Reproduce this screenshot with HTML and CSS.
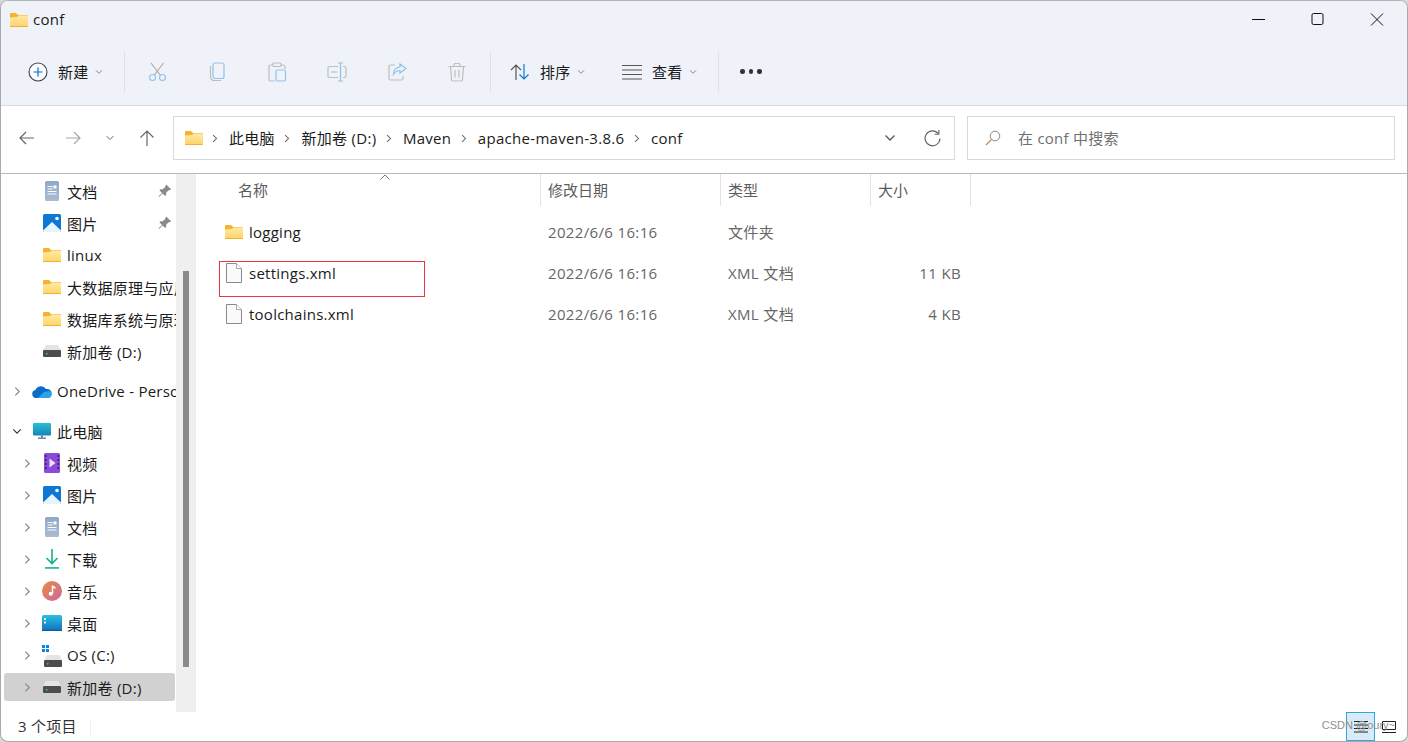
FILE: index.html
```html
<!DOCTYPE html>
<html lang="zh-CN">
<head>
<meta charset="utf-8">
<title>conf</title>
<link rel="stylesheet" href="styles.css">
</head>
<body>
<svg class="defs" width="0" height="0" aria-hidden="true">
  <defs>
    <linearGradient id="gFolder" x1="0" y1="0" x2="0" y2="1"><stop offset="0" stop-color="#ffeaa6"/><stop offset="1" stop-color="#fdd368"/></linearGradient>
    <linearGradient id="gDoc" x1="0" y1="0" x2="0" y2="1"><stop offset="0" stop-color="#8fa9c6"/><stop offset="1" stop-color="#a9bbd0"/></linearGradient>
    <linearGradient id="gMusic" x1="0" y1="0" x2="1" y2="1"><stop offset="0" stop-color="#ec8a3f"/><stop offset="1" stop-color="#c8699c"/></linearGradient>
    <linearGradient id="gDesk" x1="0" y1="0" x2="0" y2="1"><stop offset="0" stop-color="#2cc0dc"/><stop offset="1" stop-color="#1070c0"/></linearGradient>
    <linearGradient id="gPc" x1="0" y1="0" x2="0" y2="1"><stop offset="0" stop-color="#28c0d8"/><stop offset="1" stop-color="#1585b5"/></linearGradient>
    <symbol id="folder" viewBox="0 0 18 14">
      <path d="M0 1a1 1 0 0 1 1-1h5l2 2h9a1 1 0 0 1 1 1v10a1 1 0 0 1-1 1H1a1 1 0 0 1-1-1z" fill="#f4b42f"/>
      <path d="M0 4.500l7-.5 2-1.500h8a1 1 0 0 1 1 1V13a1 1 0 0 1-1 1H1a1 1 0 0 1-1-1z" fill="url(#gFolder)"/>
      <path d="M0 13h18v.2a.8.8 0 0 1-.8.8H.8a.8.8 0 0 1-.8-.8z" fill="#f0b030"/>
    </symbol>
    <symbol id="doc" viewBox="0 0 14 20">
      <rect width="14" height="20" rx="1.500" fill="url(#gDoc)"/>
      <path d="M2.500 5h5v1h-5zM2.500 7.500h5v1h-5zM2.500 10h9v1h-9zM2.500 12.500h9v1h-9z" fill="#fff"/>
      <rect x="8.500" y="4.500" width="3" height="3" fill="#fff"/>
    </symbol>
    <symbol id="pic" viewBox="0 0 18 18">
      <rect width="18" height="18" rx="1.500" fill="#0b78d4"/>
      <path d="M0 16.500L9 8l9 8.500V17a1 1 0 0 1-1 1H1a1 1 0 0 1-1-1z" fill="#e8f3fb"/>
      <circle cx="14" cy="4.500" r="1.800" fill="#fff"/>
    </symbol>
    <symbol id="drive" viewBox="0 0 18 12">
      <path d="M3 0h12l3 5H0z" fill="#e4e4e4"/>
      <path d="M1 5h16a1 1 0 0 1 1 1v5a1 1 0 0 1-1 1H1a1 1 0 0 1-1-1V6a1 1 0 0 1 1-1z" fill="#4d4d4d"/>
      <rect x="3" y="8" width="1.500" height="1.500" fill="#3ed070"/>
    </symbol>
    <symbol id="cloud" viewBox="0 0 20 13">
      <path d="M4 13a4 4 0 0 1-.6-7.900A6 6 0 0 1 14 4a4.500 4.500 0 0 1 2 9z" fill="#0a6cc4"/>
      <path d="M6 13l6-6 5-1a3.600 3.600 0 0 1-.500 7z" fill="#29a3ea"/>
    </symbol>
    <symbol id="pc" viewBox="0 0 18 16">
      <rect width="18" height="12.500" rx="1" fill="url(#gPc)"/>
      <rect x="8" y="12.500" width="2" height="2" fill="#5d7380"/>
      <rect x="5" y="14.500" width="8" height="1.300" fill="#5d7380"/>
    </symbol>
    <symbol id="video" viewBox="0 0 16 20">
      <rect width="16" height="20" rx="1.500" fill="#8a4bd6"/>
      <path d="M5.500 5.500l6 4.500-6 4.500z" fill="#efe4fb"/>
      <path d="M1 2h1.500v2H1zM1 6h1.500v2H1zM1 10h1.500v2H1zM1 14h1.500v2H1zM13.500 2H15v2h-1.500zM13.500 6H15v2h-1.500zM13.500 10H15v2h-1.500zM13.500 14H15v2h-1.500z" fill="#3c2066"/>
    </symbol>
    <symbol id="down" viewBox="0 0 14 20">
      <path d="M7 0v14M1.500 9L7 14.500 12.500 9" fill="none" stroke="#12b08a" stroke-width="1.600"/>
      <rect y="18" width="14" height="1.800" fill="#2bbf9a"/>
    </symbol>
    <symbol id="music" viewBox="0 0 20 20">
      <circle cx="10" cy="10" r="10" fill="url(#gMusic)"/>
      <path d="M10.500 4.500v8" stroke="#fff" stroke-width="1.500" fill="none"/>
      <circle cx="8.700" cy="12.700" r="2" fill="#fff"/>
      <path d="M10.500 4.500l3 1.500v1.700l-3-1z" fill="#fff"/>
    </symbol>
    <symbol id="desk" viewBox="0 0 20 16">
      <rect width="20" height="16" rx="1.500" fill="url(#gDesk)"/>
      <rect x="2" y="3" width="2" height="2" fill="#d8f4fa"/>
      <rect x="2" y="6.500" width="2" height="2" fill="#d8f4fa"/>
      <rect y="14.800" width="20" height="1.200" fill="#0a5ca8"/>
    </symbol>
    <symbol id="file" viewBox="0 0 16 20">
      <path d="M.5.500h10l5 5v14H.500z" fill="#fafafa" stroke="#8a8a8a"/>
      <path d="M10.500.500v5h5" fill="#fff" stroke="#a8a8a8"/>
    </symbol>
    <symbol id="chev-r" viewBox="0 0 8 12"><path d="M1.500 1.500L6 6l-4.500 4.500" fill="none" stroke="currentColor" stroke-width="1.400"/></symbol>
    <symbol id="chev-d" viewBox="0 0 12 8"><path d="M1.500 1.500L6 6l4.500-4.500" fill="none" stroke="currentColor" stroke-width="1.300"/></symbol>
    <symbol id="pin" viewBox="0 0 14 14"><path d="M8.500.800l4.700 4.700-1.300.700-.9-.3-2.700 2.700-.1 2.400-1 1L4.600 9.400 1 13l-.6-.4 3.600-3.700-2.600-2.600 1-1 2.400-.1L7.500 2.500l-.2-.9z" fill="#8a8a8a"/></symbol>
  </defs>
</svg>

<div class="window">
  <header class="chrome">
    <div class="titlebar">
      <svg class="ico-title"><use href="#folder"/></svg>
      <span class="title-text">conf</span>
      <div class="winctl">
        <svg class="ctl" viewBox="0 0 14 14"><path d="M0 6.500h13" stroke="#111" stroke-width="1" fill="none"/></svg>
        <svg class="ctl" viewBox="0 0 14 14"><rect x="1" y=".5" width="11" height="11" rx="1.500" stroke="#111" stroke-width="1" fill="none"/></svg>
        <svg class="ctl" viewBox="0 0 14 14"><path d="M1 .5l12 12M13 .5l-12 12" stroke="#111" stroke-width="1" fill="none"/></svg>
      </div>
    </div>
    <div class="toolbar">
      <div class="tool tool-new">
        <svg class="tico-20" viewBox="0 0 20 20"><circle cx="10" cy="10" r="9" fill="#fafbfe" stroke="#444" stroke-width="1.100"/><path d="M10 5.500v9M5.500 10h9" stroke="#0a6cc4" stroke-width="1.200"/></svg>
        <span class="tool-label">新建</span>
        <svg class="tchev"><use href="#chev-d"/></svg>
      </div>
      <i class="tsep"></i>
      <div class="tool-group">
        <svg class="tico-20" viewBox="0 0 20 20"><g fill="none" stroke-width="1.100"><path d="M4 1l9.500 12.500M16.500 1L7 13.500" stroke="#a8a8a8"/><circle cx="5.500" cy="15.500" r="3" stroke="#93c2ea"/><circle cx="15.500" cy="15.500" r="3" stroke="#93c2ea"/></g></svg>
        <svg class="tico-20" viewBox="0 0 20 20"><g fill="none" stroke-width="1.200"><path d="M3.500 4v11a3.500 3.500 0 0 0 3.500 3.500h7" stroke="#bdbdbd"/><rect x="6" y="1" width="11" height="15.500" rx="2" stroke="#93c2ea"/></g></svg>
        <svg class="tico-20" viewBox="0 0 20 20"><g fill="none" stroke-width="1.200"><path d="M6 3H3.500A1.500 1.500 0 0 0 2 4.500v13A1.500 1.500 0 0 0 3.500 19H8M14 3h2.500A1.500 1.500 0 0 1 18 4.500V7" stroke="#bdbdbd"/><rect x="6" y="1" width="8" height="3.500" rx="1" stroke="#bdbdbd"/><rect x="9" y="8" width="9.500" height="11" rx="1.500" stroke="#93c2ea"/></g></svg>
        <svg class="tico-20" viewBox="0 0 20 20"><g fill="none" stroke-width="1.200"><path d="M11 4.500H2.500A1.500 1.500 0 0 0 1 6v8a1.500 1.500 0 0 0 1.500 1.500H11M16 4.500h1.500A1.500 1.500 0 0 1 19 6v8a1.500 1.500 0 0 1-1.500 1.500H16" stroke="#bdbdbd"/><path d="M13.500 1v18M11 1h5M11 19h5M4 10h6" stroke="#93c2ea"/></g></svg>
        <svg class="tico-20" viewBox="0 0 20 20"><g fill="none" stroke-width="1.200"><path d="M8 3H3.500A1.500 1.500 0 0 0 2 4.500v12A1.500 1.500 0 0 0 3.500 18h11a1.500 1.500 0 0 0 1.500-1.500V14" stroke="#bdbdbd"/><path d="M13 2l6 4.500-6 4.500V8.500c-3.500 0-5 1.500-6.500 4 0-4 2.500-7 6.500-7.500z" stroke="#93c2ea"/></g></svg>
        <svg class="tico-20" viewBox="0 0 20 20"><g fill="none" stroke="#bdbdbd" stroke-width="1.200"><path d="M1.500 4.500h17M7 4.500V3a1.500 1.500 0 0 1 1.500-1.500h3A1.500 1.500 0 0 1 13 3v1.500M3.500 4.500l1 13a1.500 1.500 0 0 0 1.500 1.500h8a1.500 1.500 0 0 0 1.500-1.500l1-13M8 8v7.500M12 8v7.500"/></g></svg>
      </div>
      <i class="tsep"></i>
      <div class="tool tool-sort">
        <svg class="tico-20" viewBox="0 0 20 20"><path d="M6 18V3M1 8l5-5 5 5" fill="none" stroke="#555" stroke-width="1.200"/><path d="M14 2v15M9.500 12.500L14 17l4.500-4.500" fill="none" stroke="#0a7cd4" stroke-width="1.200"/></svg>
        <span class="tool-label">排序</span>
        <svg class="tchev"><use href="#chev-d"/></svg>
      </div>
      <div class="tool tool-view">
        <svg class="tico-20" viewBox="0 0 20 20"><path d="M0 3.500h20M0 8h20M0 12.500h20M0 17h20" fill="none" stroke="#555" stroke-width="1"/></svg>
        <span class="tool-label">查看</span>
        <svg class="tchev"><use href="#chev-d"/></svg>
      </div>
      <i class="tsep"></i>
      <div class="dots"><i></i><i></i><i></i></div>
    </div>
  </header>

  <nav class="navbar">
    <div class="navbtns">
      <svg class="nico" viewBox="0 0 16 16"><path d="M15 8H1M7 2L1 8l6 6" fill="none" stroke="#666" stroke-width="1.200"/></svg>
      <svg class="nico" viewBox="0 0 16 16"><path d="M1 8h14M9 2l6 6-6 6" fill="none" stroke="#a8a8a8" stroke-width="1.200"/></svg>
      <svg class="nchev"><use href="#chev-d"/></svg>
      <svg class="nico nico-up" viewBox="0 0 16 16"><path d="M8 16V1M1.500 7.500L8 1l6.500 6.500" fill="none" stroke="#666" stroke-width="1.200"/></svg>
    </div>
    <div class="address">
      <svg class="addr-folder"><use href="#folder"/></svg>
      <svg class="crumb-chev"><use href="#chev-r"/></svg>
      <span class="crumb">此电脑</span>
      <svg class="crumb-chev"><use href="#chev-r"/></svg>
      <span class="crumb">新加卷 (D:)</span>
      <svg class="crumb-chev"><use href="#chev-r"/></svg>
      <span class="crumb">Maven</span>
      <svg class="crumb-chev"><use href="#chev-r"/></svg>
      <span class="crumb">apache-maven-3.8.6</span>
      <svg class="crumb-chev"><use href="#chev-r"/></svg>
      <span class="crumb">conf</span>
      <svg class="addr-drop"><use href="#chev-d"/></svg>
      <svg class="addr-refresh" viewBox="0 0 16 16"><path d="M13.500 3.500A7 7 0 1 0 15 8" fill="none" stroke="#666" stroke-width="1.100"/><path d="M14 0v4h-4" fill="none" stroke="#666" stroke-width="1.100"/></svg>
    </div>
    <div class="search">
      <svg class="search-ico" viewBox="0 0 16 16"><circle cx="10" cy="6" r="4.800" fill="none" stroke="#888" stroke-width="1"/><path d="M6.500 9.500L1 15" stroke="#b08a60" stroke-width="1.100"/></svg>
      <span class="search-text">在 conf 中搜索</span>
    </div>
  </nav>

  <main class="body">
    <aside class="sidebar">
      <div class="tree">
        <div class="row"><span class="chev-slot"></span><span class="icon-slot"><svg class="i-doc"><use href="#doc"/></svg></span><span class="lbl">文档</span><svg class="pin"><use href="#pin"/></svg></div>
        <div class="row"><span class="chev-slot"></span><span class="icon-slot"><svg class="i-pic"><use href="#pic"/></svg></span><span class="lbl">图片</span><svg class="pin"><use href="#pin"/></svg></div>
        <div class="row"><span class="chev-slot"></span><span class="icon-slot"><svg class="i-folder"><use href="#folder"/></svg></span><span class="lbl">linux</span></div>
        <div class="row"><span class="chev-slot"></span><span class="icon-slot"><svg class="i-folder"><use href="#folder"/></svg></span><span class="lbl">大数据原理与应用</span></div>
        <div class="row"><span class="chev-slot"></span><span class="icon-slot"><svg class="i-folder"><use href="#folder"/></svg></span><span class="lbl">数据库系统与原理</span></div>
        <div class="row"><span class="chev-slot"></span><span class="icon-slot"><svg class="i-drive"><use href="#drive"/></svg></span><span class="lbl">新加卷 (D:)</span></div>
        <div class="row lv0 spaced"><span class="chev-slot"><svg class="chev"><use href="#chev-r"/></svg></span><span class="icon-slot"><svg class="i-cloud"><use href="#cloud"/></svg></span><span class="lbl">OneDrive - Personal</span></div>
        <div class="row lv0"><span class="chev-slot"><svg class="chev-open"><use href="#chev-d"/></svg></span><span class="icon-slot"><svg class="i-pc"><use href="#pc"/></svg></span><span class="lbl">此电脑</span></div>
        <div class="row"><span class="chev-slot"><svg class="chev"><use href="#chev-r"/></svg></span><span class="icon-slot"><svg class="i-video"><use href="#video"/></svg></span><span class="lbl">视频</span></div>
        <div class="row"><span class="chev-slot"><svg class="chev"><use href="#chev-r"/></svg></span><span class="icon-slot"><svg class="i-pic"><use href="#pic"/></svg></span><span class="lbl">图片</span></div>
        <div class="row"><span class="chev-slot"><svg class="chev"><use href="#chev-r"/></svg></span><span class="icon-slot"><svg class="i-doc"><use href="#doc"/></svg></span><span class="lbl">文档</span></div>
        <div class="row"><span class="chev-slot"><svg class="chev"><use href="#chev-r"/></svg></span><span class="icon-slot"><svg class="i-doc"><use href="#down"/></svg></span><span class="lbl">下载</span></div>
        <div class="row"><span class="chev-slot"><svg class="chev"><use href="#chev-r"/></svg></span><span class="icon-slot"><svg class="i-music"><use href="#music"/></svg></span><span class="lbl">音乐</span></div>
        <div class="row"><span class="chev-slot"><svg class="chev"><use href="#chev-r"/></svg></span><span class="icon-slot"><svg class="i-desk"><use href="#desk"/></svg></span><span class="lbl">桌面</span></div>
        <div class="row"><span class="chev-slot"><svg class="chev"><use href="#chev-r"/></svg></span><span class="icon-slot os-slot"><svg class="i-drive os-drive"><use href="#drive"/></svg><svg class="winlogo" viewBox="0 0 7 7"><path d="M0 0h3v3H0zM4 0h3v3H4zM0 4h3v3H0zM4 4h3v3H4z" fill="#0a84e0"/></svg></span><span class="lbl">OS (C:)</span></div>
        <div class="row selected"><span class="chev-slot"><svg class="chev"><use href="#chev-r"/></svg></span><span class="icon-slot"><svg class="i-drive"><use href="#drive"/></svg></span><span class="lbl">新加卷 (D:)</span></div>
      </div>
      <div class="scrolltrack"><div class="thumb"></div></div>
    </aside>

    <section class="list">
      <div class="cols head">
        <div class="hcell hname">名称<svg class="sortcaret" viewBox="0 0 10 6"><path d="M.5 5.500L5 1l4.500 4.500" fill="none" stroke="#777" stroke-width="1"/></svg></div>
        <div class="hcell">修改日期</div>
        <div class="hcell">类型</div>
        <div class="hcell">大小</div>
      </div>
      <div class="rows">
        <div class="cols frow">
          <div class="cname"><svg class="f-folder"><use href="#folder"/></svg><span>logging</span></div>
          <div class="cell">2022/6/6 16:16</div>
          <div class="cell">文件夹</div>
          <div class="cell csize"></div>
        </div>
        <div class="cols frow">
          <div class="cname"><svg class="f-file"><use href="#file"/></svg><span>settings.xml</span></div>
          <div class="cell">2022/6/6 16:16</div>
          <div class="cell">XML 文档</div>
          <div class="cell csize">11 KB</div>
        </div>
        <div class="cols frow">
          <div class="cname"><svg class="f-file"><use href="#file"/></svg><span>toolchains.xml</span></div>
          <div class="cell">2022/6/6 16:16</div>
          <div class="cell">XML 文档</div>
          <div class="cell csize">4 KB</div>
        </div>
      </div>
      <div class="redbox"></div>
    </section>
  </main>

  <footer class="status">
    <span class="count">3 个项目</span>
    <i class="ssep"></i>
    <div class="viewbtns">
      <div class="vbtn active"><svg class="vico" viewBox="0 0 16 14"><path d="M1 1.500h14M1 5h14M1 8.500h14M1 12h14" stroke="#222" stroke-width="1" fill="none"/></svg></div>
      <div class="vbtn"><svg class="vico" viewBox="0 0 16 14"><path d="M1.500 1.500h13v8h-13zM1 12.500h14" stroke="#222" stroke-width="1" fill="none"/></svg></div>
    </div>
    <span class="watermark">CSDN @oury~</span>
  </footer>
</div>
</body>
</html>
```
FILE: styles.css
```css
* { box-sizing: border-box; }
html, body { margin: 0; padding: 0; height: 100%; background: #d8d8d8; overflow: hidden; }
body { font-family: "Open Sans", "Noto Sans CJK SC", sans-serif; font-size: 15px; letter-spacing: .25px; color: #1b1b1b; }
svg { display: block; flex: none; }
.defs { position: absolute; }
.window { width: 1408px; height: 742px; display: flex; flex-direction: column; background: #fff; border: 1px solid #a9a9a9; border-top-color: #b4b4b4; border-radius: 8px; overflow: hidden; }

.chrome { height: 105px; background: #eff2f9; border-bottom: 1px solid #d9dadd; flex: none; }
.titlebar { height: 37px; display: flex; align-items: center; padding-left: 9px; }
.ico-title { width: 18px; height: 14px; margin-top: 1px; }
.title-text { margin-left: 5px; margin-top: -1px; }
.winctl { margin-left: auto; display: flex; gap: 45px; padding-right: 23px; }
.ctl { width: 14px; height: 14px; }

.toolbar { height: 67px; display: flex; align-items: center; padding-left: 27px; }
.tool { display: flex; align-items: center; }
.tico-20 { width: 20px; height: 20px; }
.tool-label { margin-left: 10px; width: 30px; white-space: nowrap; }
.tchev { width: 8px; height: 6px; color: #777; margin-left: 7px; }
.tsep { width: 1px; height: 40px; background: #dde0e6; flex: none; }
.tool-new { width: 96px; }
.tool-group { display: flex; gap: 40px; padding-left: 22px; padding-right: 23px; }
.tool-sort { padding-left: 19px; width: 131px; }
.tool-view { width: 96px; }
.dots { display: flex; gap: 4px; margin-left: 21px; }
.dots i { width: 4.500px; height: 4.500px; border-radius: 50%; background: #333; }

.navbar { height: 68px; display: flex; align-items: center; border-bottom: 1px solid #b9b9b9; flex: none; padding-left: 18px; padding-bottom: 3px; }
.navbtns { display: flex; align-items: center; width: 154px; }
.nico { width: 16px; height: 16px; margin-right: 30px; }
.nchev { width: 10px; height: 6px; color: #666; margin-right: 24px; margin-left: -6px; }
.nico-up { margin: 0; }
.address { width: 782px; height: 44px; border: 1px solid #d9d9d9; display: flex; align-items: center; padding-left: 11px; background: #fff; }
.addr-folder { width: 18px; height: 14px; margin-right: 9px; }
.crumb-chev { width: 6px; height: 9px; color: #666; margin: 0 11px 0 0; }
.crumb { letter-spacing: .3px; margin-right: 9.500px; margin-top: -1px; white-space: nowrap; }
.addr-drop { width: 14px; height: 8px; color: #555; margin-left: auto; }
.addr-refresh { width: 17px; height: 17px; margin-left: 27px; margin-right: 13px; }
.search { width: 428px; height: 44px; margin-left: 12px; border: 1px solid #d9d9d9; display: flex; align-items: center; padding-left: 17px; }
.search-ico { width: 16px; height: 16px; }
.search-text { margin-left: 17px; color: #707070; white-space: nowrap; margin-top: -1px; }

.body { flex: 1; display: flex; min-height: 0; }
.sidebar { width: 195px; display: flex; flex: none; overflow: hidden; }
.tree { width: 175px; padding-top: 1px; flex: none; overflow: hidden; }
.row { height: 32px; display: flex; align-items: center; white-space: nowrap; overflow: hidden; position: relative; padding-left: 22px; }
.lv0 { padding-left: 12px; }
.spaced { margin-top: 8px; margin-bottom: 8px; }
.chev-slot { width: 8px; height: 12px; flex: none; display: flex; align-items: center; justify-content: center; }
.chev { width: 7px; height: 11px; color: #8a8a8a; }
.chev-open { width: 10px; height: 7px; color: #333; flex: none; }
.icon-slot { width: 20px; height: 24px; margin-left: 11px; flex: none; display: flex; align-items: center; justify-content: center; }
.lbl { margin-left: 5px; white-space: nowrap; }
.i-doc { width: 14px; height: 20px; }
.i-pic { width: 18px; height: 18px; }
.i-folder { width: 18px; height: 14px; }
.i-drive { width: 18px; height: 12px; }
.i-video { width: 16px; height: 20px; }
.i-music { width: 20px; height: 20px; }
.i-desk { width: 20px; height: 16px; }
.i-cloud { width: 20px; height: 13px; }
.i-pc { width: 18px; height: 16px; }
.os-slot { position: relative; }
.os-drive { margin-top: 12px; margin-left: 1px; }
.winlogo { position: absolute; left: 0; top: 2px; width: 7px; height: 7px; }
.pin { position: absolute; left: 157px; top: 9px; width: 14px; height: 14px; }
.selected { background: #d1d1d1; border-radius: 3px; margin: 2px 1px 0 3px; height: 28px; padding-left: 19px; }

.scrolltrack { width: 20px; background: #efefef; flex: none; padding-top: 97px; padding-left: 7px; }
.thumb { width: 6px; height: 396px; background: #8b8b8b; }

.list { flex: 1; position: relative; min-width: 0; }
.cols { display: grid; grid-template-columns: 345px 180px 150px 100px; }
.head { height: 32px; }
.hcell { border-right: 1px solid #e3e3e3; padding-left: 7px; padding-bottom: 2px; display: flex; align-items: center; color: #5c5c5c; letter-spacing: 0; }
.hname { padding-left: 42px; position: relative; }
.sortcaret { position: absolute; left: 184px; top: 0; width: 10px; height: 6px; }
.rows { padding-top: 5px; }
.frow { height: 41px; align-items: center; }
.cname { display: flex; align-items: center; padding-left: 29px; }
.f-folder { width: 18px; height: 14px; margin-right: 6px; }
.f-file { width: 16px; height: 20px; margin: 0 7px 0 1px; }
.cell { padding-left: 7px; color: #666; letter-spacing: .35px; white-space: nowrap; }
.csize { text-align: right; padding-right: 10px; }
.redbox { position: absolute; left: 23px; top: 87px; width: 206px; height: 36px; border: 1px solid #f0333a; }

.status { height: 29px; display: flex; align-items: center; position: relative; flex: none; padding-left: 17px; }
.count { color: #333; margin-top: -3px; }
.ssep { width: 1px; height: 16px; background: #eee; margin-left: 13px; }
.viewbtns { margin-left: auto; display: flex; gap: 4px; padding-right: 8px; height: 100%; align-items: center; }
.vbtn { width: 20px; height: 27px; display: flex; align-items: center; justify-content: center; }
.vbtn.active { width: 29px; height: 29px; background: #d9ebf6; border: 1px solid #2ea6e0; }
.vico { width: 16px; height: 14px; }
.watermark { position: absolute; right: 12px; top: 7px; font-family: "Liberation Sans", sans-serif; font-size: 11px; letter-spacing: 0; color: #8f8f8f; }
```
